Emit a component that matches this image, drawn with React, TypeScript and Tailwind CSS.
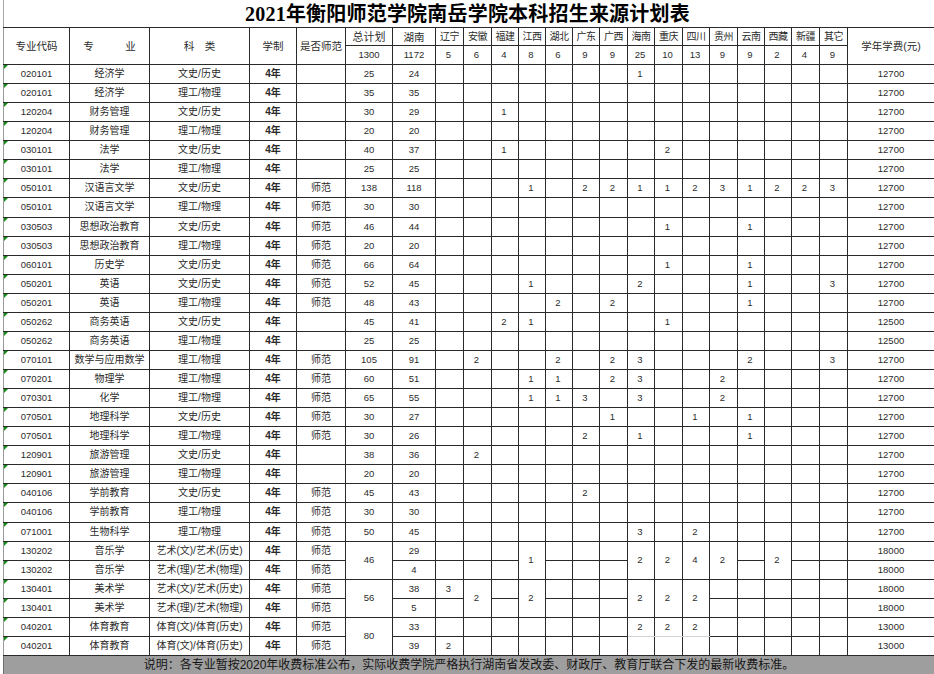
import React from 'react';

type PC = { v: string; rs?: number; light?: boolean };
type Row = {
  code: string;
  name: string;
  cat: string;
  sf: string;
  total: string | null;
  totalRs?: number;
  hn: string;
  prov: Record<number, PC>;
  skip: number[];
  fee: string;
};

const PROV = ['辽宁', '安徽', '福建', '江西', '湖北', '广东', '广西', '海南', '重庆', '四川', '贵州', '云南', '西藏', '新疆', '其它'];
const PROV_T = ['5', '6', '4', '8', '6', '9', '9', '25', '10', '13', '9', '9', '2', '4', '9'];
const PROV_W = [28, 28, 27, 27, 27, 27, 28, 27, 28, 27, 28, 27, 27, 28, 28];

const s = (code: string, name: string, cat: string, sf: string, total: string, hn: string, p: Record<number, string>, fee: string): Row => {
  const prov: Record<number, PC> = {};
  Object.keys(p).forEach((k) => {
    prov[Number(k)] = { v: p[Number(k)] };
  });
  return { code, name, cat, sf, total, hn, prov, skip: [], fee };
};

const WS = '文史/历史';
const LG = '理工/物理';
const A1 = '艺术(文)/艺术(历史)';
const A2 = '艺术(理)/艺术(物理)';
const T1 = '体育(文)/体育(历史)';

const ROWS: Row[] = [
  s('020101', '经济学', WS, '', '25', '24', { 7: '1' }, '12700'),
  s('020101', '经济学', LG, '', '35', '35', {}, '12700'),
  s('120204', '财务管理', WS, '', '30', '29', { 2: '1' }, '12700'),
  s('120204', '财务管理', LG, '', '20', '20', {}, '12700'),
  s('030101', '法学', WS, '', '40', '37', { 2: '1', 8: '2' }, '12700'),
  s('030101', '法学', LG, '', '25', '25', {}, '12700'),
  s('050101', '汉语言文学', WS, '师范', '138', '118', { 3: '1', 5: '2', 6: '2', 7: '1', 8: '1', 9: '2', 10: '3', 11: '1', 12: '2', 13: '2', 14: '3' }, '12700'),
  s('050101', '汉语言文学', LG, '师范', '30', '30', {}, '12700'),
  s('030503', '思想政治教育', WS, '师范', '46', '44', { 8: '1', 11: '1' }, '12700'),
  s('030503', '思想政治教育', LG, '师范', '20', '20', {}, '12700'),
  s('060101', '历史学', WS, '师范', '66', '64', { 8: '1', 11: '1' }, '12700'),
  s('050201', '英语', WS, '师范', '52', '45', { 3: '1', 7: '2', 11: '1', 14: '3' }, '12700'),
  s('050201', '英语', LG, '师范', '48', '43', { 4: '2', 6: '2', 11: '1' }, '12700'),
  s('050262', '商务英语', WS, '', '45', '41', { 2: '2', 3: '1', 8: '1' }, '12500'),
  s('050262', '商务英语', LG, '', '25', '25', {}, '12500'),
  s('070101', '数学与应用数学', LG, '师范', '105', '91', { 1: '2', 4: '2', 6: '2', 7: '3', 11: '2', 14: '3' }, '12700'),
  s('070201', '物理学', LG, '师范', '60', '51', { 3: '1', 4: '1', 6: '2', 7: '3', 10: '2' }, '12700'),
  s('070301', '化学', LG, '师范', '65', '55', { 3: '1', 4: '1', 5: '3', 7: '3', 10: '2' }, '12700'),
  s('070501', '地理科学', WS, '师范', '30', '27', { 6: '1', 9: '1', 11: '1' }, '12700'),
  s('070501', '地理科学', LG, '师范', '30', '26', { 5: '2', 7: '1', 11: '1' }, '12700'),
  s('120901', '旅游管理', WS, '', '38', '36', { 1: '2' }, '12700'),
  s('120901', '旅游管理', LG, '', '20', '20', {}, '12700'),
  s('040106', '学前教育', WS, '师范', '45', '43', { 5: '2' }, '12700'),
  s('040106', '学前教育', LG, '师范', '30', '30', {}, '12700'),
  s('071001', '生物科学', LG, '师范', '50', '45', { 7: '3', 9: '2' }, '12700'),
  {
    code: '130202', name: '音乐学', cat: A1, sf: '师范', total: '46', totalRs: 2, hn: '29',
    prov: { 3: { v: '1', rs: 2 }, 7: { v: '2', rs: 2 }, 8: { v: '2', rs: 2 }, 9: { v: '4', rs: 2 }, 10: { v: '2', rs: 2 }, 12: { v: '2', rs: 2 } },
    skip: [], fee: '18000',
  },
  {
    code: '130202', name: '音乐学', cat: A2, sf: '师范', total: null, hn: '4',
    prov: {}, skip: [3, 7, 8, 9, 10, 12], fee: '18000',
  },
  {
    code: '130401', name: '美术学', cat: A1, sf: '师范', total: '56', totalRs: 2, hn: '38',
    prov: { 0: { v: '3' }, 1: { v: '2', rs: 2 }, 3: { v: '2', rs: 2 }, 7: { v: '2', rs: 2 }, 8: { v: '2', rs: 2 }, 9: { v: '2', rs: 2 } },
    skip: [], fee: '18000',
  },
  {
    code: '130401', name: '美术学', cat: A2, sf: '师范', total: null, hn: '5',
    prov: {}, skip: [1, 3, 7, 8, 9], fee: '18000',
  },
  {
    code: '040201', name: '体育教育', cat: T1, sf: '师范', total: '80', totalRs: 2, hn: '33',
    prov: { 7: { v: '2', light: true }, 8: { v: '2', light: true }, 9: { v: '2', light: true } },
    skip: [], fee: '13000',
  },
  {
    code: '040201', name: '体育教育', cat: T1, sf: '师范', total: null, hn: '39',
    prov: { 0: { v: '2' } }, skip: [], fee: '13000',
  },
];

const bd = 'border border-[#2a2a2a] p-0';

function Tri() {
  return (
    <span className="absolute left-0 top-0 w-0 h-0 border-t-[4px] border-r-[4px] border-t-[#138a13] border-r-transparent" />
  );
}

export default function App() {
  return (
    <div
      className="w-[934px] h-[674px] bg-white overflow-hidden text-[#2b2b2b]"
      style={{ fontFamily: '"Liberation Sans", "Noto Sans CJK SC", sans-serif' }}
    >
      <div className="ml-[3px] h-[27px] border-l border-[#a8a8a8] flex items-center justify-center">
        <div
          className="text-[20px] font-bold text-black leading-none -ml-[3px] tracking-[0.2px]"
          style={{ fontFamily: '"Liberation Serif", "Noto Sans CJK SC", serif' }}
        >
          2021年衡阳师范学院南岳学院本科招生来源计划表
        </div>
      </div>
      <table className="ml-[3px] w-[931px] table-fixed border-collapse text-[10px] leading-[12px]">
        <colgroup>
          <col className="w-[66px]" />
          <col className="w-[80px]" />
          <col className="w-[100px]" />
          <col className="w-[47px]" />
          <col className="w-[49px]" />
          <col className="w-[47px]" />
          <col className="w-[43px]" />
          {PROV_W.map((w, i) => (
            <col key={i} style={{ width: w }} />
          ))}
          <col className="w-[87px]" />
        </colgroup>
        <tbody>
          <tr className="h-[18px]">
            <td rowSpan={2} className={`${bd} border-l-[#9a9a9a] text-center text-[10.5px]`}>专业代码</td>
            <td rowSpan={2} className={`${bd} text-center text-[10.5px]`}>专　　　业</td>
            <td rowSpan={2} className={`${bd} text-center text-[10.5px]`}>科　类</td>
            <td rowSpan={2} className={`${bd} text-center text-[10.5px]`}>学制</td>
            <td rowSpan={2} className={`${bd} text-center text-[10.5px]`}>是否师范</td>
            <td className={`${bd} text-center text-[11px]`}>总计划</td>
            <td className={`${bd} text-center text-[10.5px]`}>湖南</td>
            {PROV.map((p, i) => (
              <td key={i} className={`${bd} text-center text-[10px] tracking-[-0.5px]`}>{p}</td>
            ))}
            <td rowSpan={2} className={`${bd} text-center text-[10.5px]`}>学年学费(元)</td>
          </tr>
          <tr className="h-[19px]">
            <td className={`${bd} text-center text-[9.5px]`}>1300</td>
            <td className={`${bd} text-center text-[9.5px]`}>1172</td>
            {PROV_T.map((p, i) => (
              <td key={i} className={`${bd} text-center text-[9.5px] pr-[2px]`}>{p}</td>
            ))}
          </tr>
          {ROWS.map((r, ri) => (
            <tr key={ri} className="h-[19.065px]">
              <td className={`${bd} border-l-[#9a9a9a] relative text-center text-[9.5px]`}>
                <Tri />
                {r.code}
              </td>
              <td className={`${bd} text-center`}>{r.name}</td>
              <td className={`${bd} text-center whitespace-nowrap`}>{r.cat}</td>
              <td className={`${bd} text-center font-bold`}>4年</td>
              <td className={`${bd} text-center`}>{r.sf}</td>
              {r.total !== null && (
                <td rowSpan={r.totalRs ?? 1} className={`${bd} text-center text-[9.5px]`}>{r.total}</td>
              )}
              <td className={`${bd} text-center text-[9.5px]`}>{r.hn}</td>
              {PROV.map((_, pi) => {
                if (r.skip.includes(pi)) return null;
                const c = r.prov[pi];
                return (
                  <td
                    key={pi}
                    rowSpan={c?.rs ?? 1}
                    className={
                      c?.light
                        ? `${bd} border-b-[#d4d4d4] text-center text-[9.5px] pr-[2px]`
                        : `${bd} text-center text-[9.5px] pr-[2px]`
                    }
                  >
                    {c ? c.v : ''}
                  </td>
                );
              })}
              <td className={`${bd} text-center text-[9.5px]`}>{r.fee}</td>
            </tr>
          ))}
        </tbody>
      </table>
      <div className="ml-[3px] h-[19px] border-l border-[#6e6e6e] bg-[#9e9e9e] flex items-center justify-center text-[12px] text-[#161616] leading-none">
        说明：各专业暂按2020年收费标准公布，实际收费学院严格执行湖南省发改委、财政厅、教育厅联合下发的最新收费标准。
      </div>
    </div>
  );
}
